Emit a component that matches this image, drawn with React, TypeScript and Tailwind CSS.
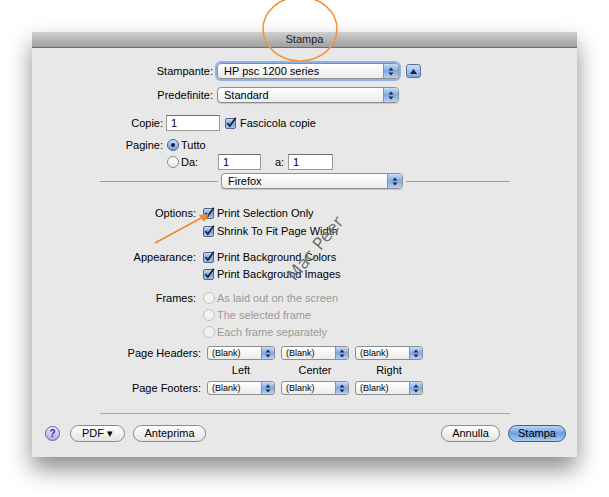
import React from "react";

const font = { fontFamily: '"Liberation Sans", Arial, sans-serif' };

// little blue up/down stepper used on the popup menus
const Stepper = ({ small = false }: { small?: boolean }) => (
  <div
    className={`flex items-center justify-center h-full border-l border-[#7d93b8] bg-gradient-to-b from-[#c9dcf5] via-[#7fa9e4] to-[#b7d1f3] rounded-r-[3px] ${
      small ? "w-[13px]" : "w-[15px]"
    }`}
  >
    <svg width="6" height="9" viewBox="0 0 6 9">
      <path d="M3 0.5 L5.5 3.5 H0.5 Z" fill="#1d2b45" />
      <path d="M3 8.5 L5.5 5.5 H0.5 Z" fill="#1d2b45" />
    </svg>
  </div>
);

const Popup = ({
  label,
  width,
  focus = false,
}: {
  label: string;
  width: string;
  focus?: boolean;
}) => (
  <div
    className={`flex h-[16px] ${width} items-stretch rounded-[4px] border border-[#8e8e8e] bg-gradient-to-b from-white to-[#ececec] ${
      focus ? "shadow-[0_0_0_2px_#8fb3e6]" : "shadow-[0_1px_1px_rgba(0,0,0,0.15)]"
    }`}
  >
    <span className="flex-1 pl-[6px] text-[11px] leading-[14px] text-black">{label}</span>
    <Stepper />
  </div>
);

const SmallPopup = () => (
  <div className="flex h-[14px] w-[68px] items-stretch rounded-[3px] border border-[#8e8e8e] bg-gradient-to-b from-white to-[#ececec]">
    <span className="flex-1 pl-[4px] text-[9px] leading-[12px] text-black">(Blank)</span>
    <Stepper small />
  </div>
);

const Check = () => (
  <svg width="12" height="12" viewBox="0 0 12 12" className="shrink-0">
    <defs>
      <linearGradient id="cb" x1="0" y1="0" x2="0" y2="1">
        <stop offset="0" stopColor="#d3e3f7" />
        <stop offset="0.5" stopColor="#79a6e0" />
        <stop offset="1" stopColor="#a9c7ef" />
      </linearGradient>
    </defs>
    <rect x="0.5" y="1.5" width="10" height="10" rx="1.5" fill="url(#cb)" stroke="#53678a" />
    <path d="M2.5 6.2 L4.8 9 L10.8 0.8" fill="none" stroke="#1b2236" strokeWidth="1.8" />
  </svg>
);

const Radio = ({ on = false, disabled = false }: { on?: boolean; disabled?: boolean }) => (
  <span
    className={`flex h-[12px] w-[12px] shrink-0 items-center justify-center rounded-full border ${
      disabled
        ? "border-[#c2c2c2] bg-[#f2f2f2]"
        : on
        ? "border-[#4a6390] bg-gradient-to-b from-[#cfe0f6] to-[#6e9ddc]"
        : "border-[#8a8a8a] bg-gradient-to-b from-white to-[#e6e6e6]"
    }`}
  >
    {on && <span className="h-[4px] w-[4px] rounded-full bg-[#1b2236]" />}
  </span>
);

const Field = ({ value, width }: { value: string; width: string }) => (
  <div
    className={`h-[16px] ${width} border border-[#9a9a9a] border-t-[#6f6f6f] bg-white pl-[4px] text-[11px] leading-[14px] text-black`}
  >
    {value}
  </div>
);

const Pill = ({ children, width, blue = false }: { children: React.ReactNode; width: string; blue?: boolean }) => (
  <div
    className={`flex h-[17px] ${width} items-center justify-center rounded-full border text-[11px] ${
      blue
        ? "border-[#3f5f93] bg-gradient-to-b from-[#bcd6f5] via-[#6d9fe0] to-[#a9cbf3] text-black"
        : "border-[#8a8a8a] bg-gradient-to-b from-white to-[#e4e4e4] text-black"
    }`}
  >
    {children}
  </div>
);

export default function App() {
  return (
    <div className="relative h-[497px] w-[609px] overflow-hidden bg-white" style={font}>
      <div className="ml-[32px] mt-[32px] w-[545px] shadow-[0_12px_22px_rgba(0,0,0,0.45)]">
        {/* title bar */}
        <div className="flex h-[16px] items-center justify-center border-b border-[#6e6e6e] bg-gradient-to-b from-[#cfcfcf] to-[#a0a0a0] text-[11px] text-[#222]">
          Stampa
        </div>

        <div className="flex flex-col bg-[#e8e8e8] pb-[15px] text-[11px] text-black">
          {/* printer */}
          <div className="mt-[15px] flex h-[16px] items-center">
            <span className="w-[185px] pr-[4px] text-right">Stampante:</span>
            <Popup label="HP psc 1200 series" width="w-[182px]" focus />
            <div className="ml-[7px] flex h-[14px] w-[15px] items-center justify-center rounded-[3px] border border-[#5a739c] bg-gradient-to-b from-[#cfe0f6] to-[#79a6e0]">
              <svg width="7" height="5" viewBox="0 0 7 5">
                <path d="M3.5 0 L7 5 H0 Z" fill="#1b2236" />
              </svg>
            </div>
          </div>
          <div className="mt-[8px] flex h-[16px] items-center">
            <span className="w-[185px] pr-[4px] text-right">Predefinite:</span>
            <Popup label="Standard" width="w-[182px]" />
          </div>

          {/* copies */}
          <div className="mt-[12px] flex h-[16px] items-center">
            <span className="w-[134px] pr-[3px] text-right">Copie:</span>
            <Field value="1" width="w-[54px]" />
            <span className="ml-[5px]">
              <Check />
            </span>
            <span className="ml-[3px]">Fascicola copie</span>
          </div>
          <div className="mt-[7px] flex h-[14px] items-center">
            <span className="w-[135px] pr-[4px] text-right">Pagine:</span>
            <Radio on />
            <span className="ml-[2px]">Tutto</span>
          </div>
          <div className="mt-[2px] flex h-[16px] items-center">
            <span className="w-[135px]" />
            <Radio />
            <span className="ml-[2px] w-[37px]">Da:</span>
            <Field value="1" width="w-[43px]" />
            <span className="ml-[14px] w-[13px]">a:</span>
            <Field value="1" width="w-[45px]" />
          </div>

          {/* app section */}
          <div className="mt-[3px] flex h-[16px] items-center">
            <div className="ml-[68px] h-px w-[118px] bg-[#9d9d9d]" />
            <div className="ml-[3px]">
              <Popup label="Firefox" width="w-[182px]" />
            </div>
            <div className="ml-[3px] h-px w-[104px] bg-[#9d9d9d]" />
          </div>

          <div className="mt-[17px] flex h-[14px] items-center">
            <span className="w-[171px] pr-[7px] text-right">Options:</span>
            <Check />
            <span className="ml-[2px]">Print Selection Only</span>
          </div>
          <div className="mt-[4px] flex h-[14px] items-center">
            <span className="w-[171px] pr-[7px]" />
            <Check />
            <span className="ml-[2px]">Shrink To Fit Page Width</span>
          </div>
          <div className="mt-[12px] flex h-[14px] items-center">
            <span className="w-[171px] pr-[7px] text-right">Appearance:</span>
            <Check />
            <span className="ml-[2px]">Print Background Colors</span>
          </div>
          <div className="mt-[3px] flex h-[14px] items-center">
            <span className="w-[171px] pr-[7px]" />
            <Check />
            <span className="ml-[2px]">Print Background Images</span>
          </div>

          <div className="mt-[10px] flex h-[14px] items-center">
            <span className="w-[171px] pr-[7px] text-right">Frames:</span>
            <Radio disabled />
            <span className="ml-[2px] text-[#9a9a9a]">As laid out on the screen</span>
          </div>
          <div className="mt-[3px] flex h-[14px] items-center">
            <span className="w-[171px] pr-[7px]" />
            <Radio disabled />
            <span className="ml-[2px] text-[#9a9a9a]">The selected frame</span>
          </div>
          <div className="mt-[3px] flex h-[14px] items-center">
            <span className="w-[171px] pr-[7px]" />
            <Radio disabled />
            <span className="ml-[2px] text-[#9a9a9a]">Each frame separately</span>
          </div>

          <div className="mt-[7px] flex h-[14px] items-center gap-[6px]">
            <span className="w-[169px] text-right">Page Headers:</span>
            <SmallPopup />
            <SmallPopup />
            <SmallPopup />
          </div>
          <div className="mt-[3px] flex h-[14px] items-center gap-[6px]">
            <span className="w-[169px]" />
            <span className="w-[68px] text-center">Left</span>
            <span className="w-[68px] text-center">Center</span>
            <span className="w-[68px] text-center">Right</span>
          </div>
          <div className="mt-[4px] flex h-[14px] items-center gap-[6px]">
            <span className="w-[169px] text-right">Page Footers:</span>
            <SmallPopup />
            <SmallPopup />
            <SmallPopup />
          </div>

          <div className="ml-[68px] mt-[18px] h-px w-[410px] bg-[#a8a8a8]" />

          {/* bottom buttons */}
          <div className="mt-[11px] flex h-[17px] items-center pl-[13px] pr-[11px]">
            <div className="flex h-[15px] w-[15px] items-center justify-center rounded-full border border-[#6a5a9a] bg-gradient-to-b from-[#f0e9ff] to-[#b9a6ec] text-[10px] font-bold text-[#3a2a70]">
              ?
            </div>
            <div className="ml-[10px]">
              <Pill width="w-[55px]">PDF ▾</Pill>
            </div>
            <div className="ml-[8px]">
              <Pill width="w-[73px]">Anteprima</Pill>
            </div>
            <div className="flex-1" />
            <Pill width="w-[59px]">Annulla</Pill>
            <div className="ml-[8px]">
              <Pill width="w-[58px]" blue>
                Stampa
              </Pill>
            </div>
          </div>
        </div>
      </div>

      {/* annotations drawn over the screenshot */}
      <svg className="pointer-events-none absolute left-0 top-0" width="609" height="497">
        <ellipse cx="300" cy="29" rx="37" ry="32" fill="none" stroke="#f0973a" strokeWidth="1.6" />
        <line x1="155" y1="243" x2="203" y2="217" stroke="#f0892a" strokeWidth="1.6" />
        <path d="M209 214 L199 215 L204 222 Z" fill="#f0892a" />
      </svg>
      <span
        className="pointer-events-none absolute left-[277px] top-[236px] -rotate-[50deg] text-[17px] text-[#555] opacity-80 [text-shadow:0_0_2px_#fff]"
        style={{ fontFamily: '"DejaVu Sans", sans-serif' }}
      >
        Mac Peer
      </span>
    </div>
  );
}
